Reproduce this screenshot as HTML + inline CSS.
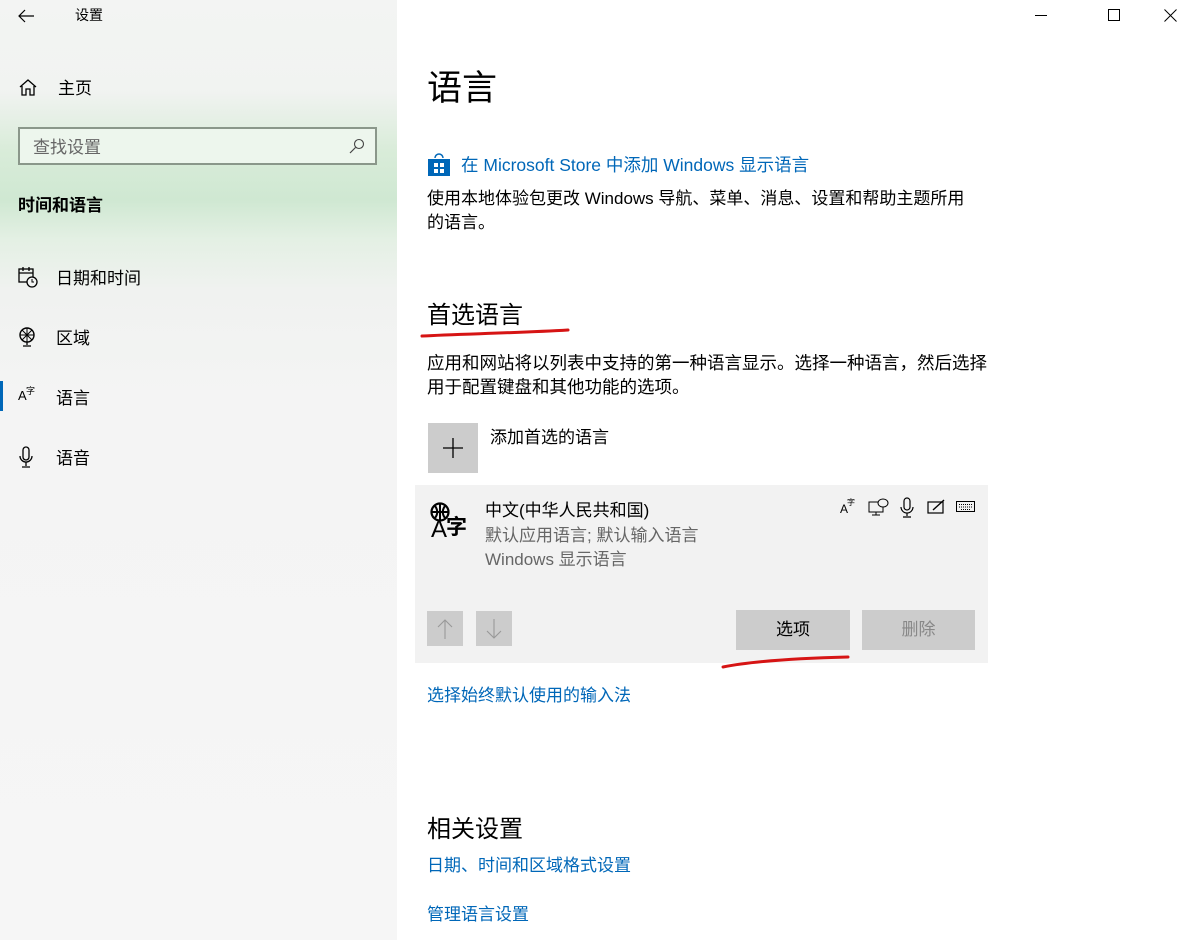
<!DOCTYPE html>
<html><head><meta charset="utf-8"><style>
*{margin:0;padding:0;box-sizing:border-box}
body{width:1192px;height:940px;position:relative;overflow:hidden;background:#fff;font-family:"Liberation Sans","Noto Sans CJK SC",sans-serif;color:#000}
.side{position:absolute;left:0;top:0;width:397px;height:940px;background:linear-gradient(180deg,#f3f4f3 0px,#f1f3f1 90px,#d9ecd9 150px,#cfe8d2 200px,#e4f0e4 240px,#f0f2f0 290px,#f4f4f4 400px,#f6f6f6 940px)}
.a{position:absolute;white-space:nowrap}
.nav{font-size:17px;color:#000}
.link{color:#0067b8;font-size:17px}
.t{font-size:17px;color:#000}
svg{position:absolute}
</style></head><body>
<div class="side"></div>
<svg style="left:17px;top:8px" width="18" height="16" viewBox="0 0 18 16"><path d="M17 8H2M8 2L2 8l6 6" fill="none" stroke="#000" stroke-width="1.2"/></svg>
<div class="a" style="left:75px;top:5px;font-size:14px">设置</div>
<svg style="left:1035px;top:15px" width="12" height="2"><rect width="12" height="1" fill="#000"/></svg>
<svg style="left:1108px;top:9px" width="13" height="13"><rect x=".5" y=".5" width="11" height="11" fill="none" stroke="#000"/></svg>
<svg style="left:1164px;top:9px" width="13" height="13"><path d="M.5 .5l12 12M12.5 .5l-12 12" stroke="#000"/></svg>

<svg style="left:18px;top:78px" width="20" height="19" viewBox="0 0 20 19"><path d="M2 9L10 2l8 7M4 8v9h4v-6h4v6h4V8" fill="none" stroke="#000" stroke-width="1.3"/></svg>
<div class="a nav" style="left:58px;top:74px">主页</div>
<div class="a" style="left:18px;top:127px;width:359px;height:38px;border:2px solid #8a978a;background:#edf6ed"></div>
<div class="a" style="left:33px;top:133px;font-size:17px;color:#666">查找设置</div>
<svg style="left:348px;top:137px" width="18" height="18" viewBox="0 0 18 18"><circle cx="11" cy="7" r="4.5" fill="none" stroke="#444" stroke-width="1.1"/><path d="M7.5 10.5L2 16" stroke="#444" stroke-width="1.2"/></svg>
<div class="a" style="left:18px;top:191px;font-size:17px;font-weight:bold">时间和语言</div>

<svg style="left:18px;top:266px" width="20" height="22" viewBox="0 0 20 22"><rect x="1" y="3" width="14" height="13" fill="none" stroke="#000" stroke-width="1.3"/><path d="M1 7h14M5 1v4M11 1v4" stroke="#000" stroke-width="1.3"/><circle cx="14" cy="16" r="5" fill="#f2f4f2" stroke="#000" stroke-width="1.3"/><path d="M14 13v3h2" fill="none" stroke="#000"/></svg>
<div class="a nav" style="left:56px;top:264px">日期和时间</div>
<svg style="left:18px;top:326px" width="20" height="22" viewBox="0 0 20 22"><circle cx="9" cy="9" r="7" fill="none" stroke="#000" stroke-width="1.4"/><path d="M4 4l10 10M14 4L4 14M9 2v14M2 9h14" stroke="#000" stroke-width="1"/><path d="M9 16v3M5 20h8" stroke="#000" stroke-width="1.3"/></svg>
<div class="a nav" style="left:56px;top:324px">区域</div>
<div class="a" style="left:0;top:381px;width:3px;height:30px;background:#0067b8"></div>
<div class="a" style="left:18px;top:388px;font-size:13px">A</div>
<div class="a" style="left:26px;top:384px;font-size:9px">字</div>
<div class="a nav" style="left:56px;top:384px">语言</div>
<svg style="left:18px;top:446px" width="16" height="22" viewBox="0 0 16 22"><rect x="5" y="1" width="6" height="13" rx="3" fill="none" stroke="#000" stroke-width="1.3"/><path d="M2 10a6 6 0 0012 0M8 16v4M4 21h8" fill="none" stroke="#000" stroke-width="1.3"/></svg>
<div class="a nav" style="left:56px;top:444px">语音</div>

<div class="a" style="left:427px;top:60px;font-size:35px">语言</div>
<svg style="left:427px;top:153px" width="24" height="24" viewBox="0 0 24 24"><path d="M8 5a4 4 0 018 0" fill="none" stroke="#0067b8" stroke-width="1.5"/><rect x="1" y="6" width="22" height="17" fill="#0067b8"/><rect x="7" y="10" width="4" height="4" fill="#fff"/><rect x="13" y="10" width="4" height="4" fill="#fff"/><rect x="7" y="16" width="4" height="4" fill="#fff"/><rect x="13" y="16" width="4" height="4" fill="#fff"/></svg>
<div class="a link" style="left:461px;top:152px;font-size:17.5px">在 Microsoft Store 中添加 Windows 显示语言</div>
<div class="a t" style="left:427px;top:187px;line-height:24px">使用本地体验包更改 Windows 导航、菜单、消息、设置和帮助主题所用<br>的语言。</div>
<div class="a" style="left:427px;top:295px;font-size:24px">首选语言</div>
<svg style="left:418px;top:326px" width="160" height="14"><path d="M4 10C40 8 100 7 150 4" fill="none" stroke="#d61414" stroke-width="3" stroke-linecap="round"/></svg>
<div class="a t" style="left:427px;top:351px;line-height:24px;font-size:17.5px">应用和网站将以列表中支持的第一种语言显示。选择一种语言，然后选择<br>用于配置键盘和其他功能的选项。</div>
<div class="a" style="left:428px;top:423px;width:50px;height:50px;background:#ccc"></div>
<svg style="left:443px;top:438px" width="20" height="20"><path d="M10 0v20M0 10h20" stroke="#000" stroke-width="1.3"/></svg>
<div class="a t" style="left:490px;top:423px">添加首选的语言</div>

<div class="a" style="left:415px;top:485px;width:573px;height:178px;background:#f2f2f2"></div>
<svg style="left:430px;top:502px" width="22" height="20" viewBox="0 0 22 20"><circle cx="10" cy="10" r="8.5" fill="none" stroke="#000" stroke-width="2.2"/><path d="M10 1v18M1 10h18M5 4c3 4 3 8 0 12M15 4c-3 4-3 8 0 12" fill="none" stroke="#000" stroke-width="2"/></svg>
<div class="a" style="left:431px;top:516px;font-size:24px;line-height:28px">A</div>
<div class="a" style="left:446px;top:515px;font-size:21px;line-height:26px;font-weight:bold">字</div>
<div class="a t" style="left:485px;top:496px">中文(中华人民共和国)</div>
<div class="a t" style="left:485px;top:521px;color:#666">默认应用语言; 默认输入语言</div>
<div class="a t" style="left:485px;top:545px;color:#666">Windows 显示语言</div>
<div class="a" style="left:840px;top:502px;font-size:12px">A</div>
<div class="a" style="left:847px;top:497px;font-size:8px">字</div>
<svg style="left:868px;top:497px" width="22" height="20" viewBox="0 0 22 20"><rect x="1" y="5" width="14" height="10" fill="none" stroke="#000"/><path d="M8 15v3M4 18h8" stroke="#000"/><ellipse cx="15" cy="6" rx="5" ry="4" fill="#f2f2f2" stroke="#000"/></svg>
<svg style="left:900px;top:497px" width="14" height="22" viewBox="0 0 14 22"><rect x="4" y="1" width="6" height="12" rx="3" fill="none" stroke="#000" stroke-width="1.2"/><path d="M1 10a6 6 0 0012 0M7 16v3M3 20h8" fill="none" stroke="#000" stroke-width="1.2"/></svg>
<svg style="left:927px;top:498px" width="20" height="16" viewBox="0 0 20 16"><rect x="1" y="4" width="15" height="11" fill="none" stroke="#000" stroke-width="1.2"/><path d="M6 12l11-10" stroke="#000" stroke-width="1.4"/></svg>
<svg style="left:956px;top:501px" width="20" height="12"><rect x=".5" y=".5" width="18" height="10" fill="none" stroke="#000"/><path d="M3 3.5h13M3 6h13M5 8.5h9" stroke="#000" stroke-dasharray="1 1"/></svg>

<div class="a" style="left:427px;top:611px;width:36px;height:35px;background:#ccc"></div>
<svg style="left:436px;top:618px" width="18" height="22"><path d="M9 21V2M2 9l7-7 7 7" fill="none" stroke="#999" stroke-width="1.1"/></svg>
<div class="a" style="left:476px;top:611px;width:36px;height:35px;background:#ccc"></div>
<svg style="left:485px;top:618px" width="18" height="22"><path d="M9 1v19M2 13l7 7 7-7" fill="none" stroke="#999" stroke-width="1.1"/></svg>
<div class="a t" style="left:736px;top:610px;width:114px;height:40px;background:#ccc;text-align:center;line-height:40px">选项</div>
<div class="a t" style="left:862px;top:610px;width:113px;height:40px;background:#ccc;text-align:center;line-height:40px;color:#888">删除</div>
<svg style="left:718px;top:650px" width="140" height="22"><path d="M5 17C40 10 90 8 130 7" fill="none" stroke="#d61414" stroke-width="3" stroke-linecap="round"/></svg>
<div class="a link" style="left:427px;top:681px">选择始终默认使用的输入法</div>

<div class="a" style="left:427px;top:809px;font-size:24px">相关设置</div>
<div class="a link" style="left:427px;top:851px">日期、时间和区域格式设置</div>
<div class="a link" style="left:427px;top:900px">管理语言设置</div>
</body></html>
